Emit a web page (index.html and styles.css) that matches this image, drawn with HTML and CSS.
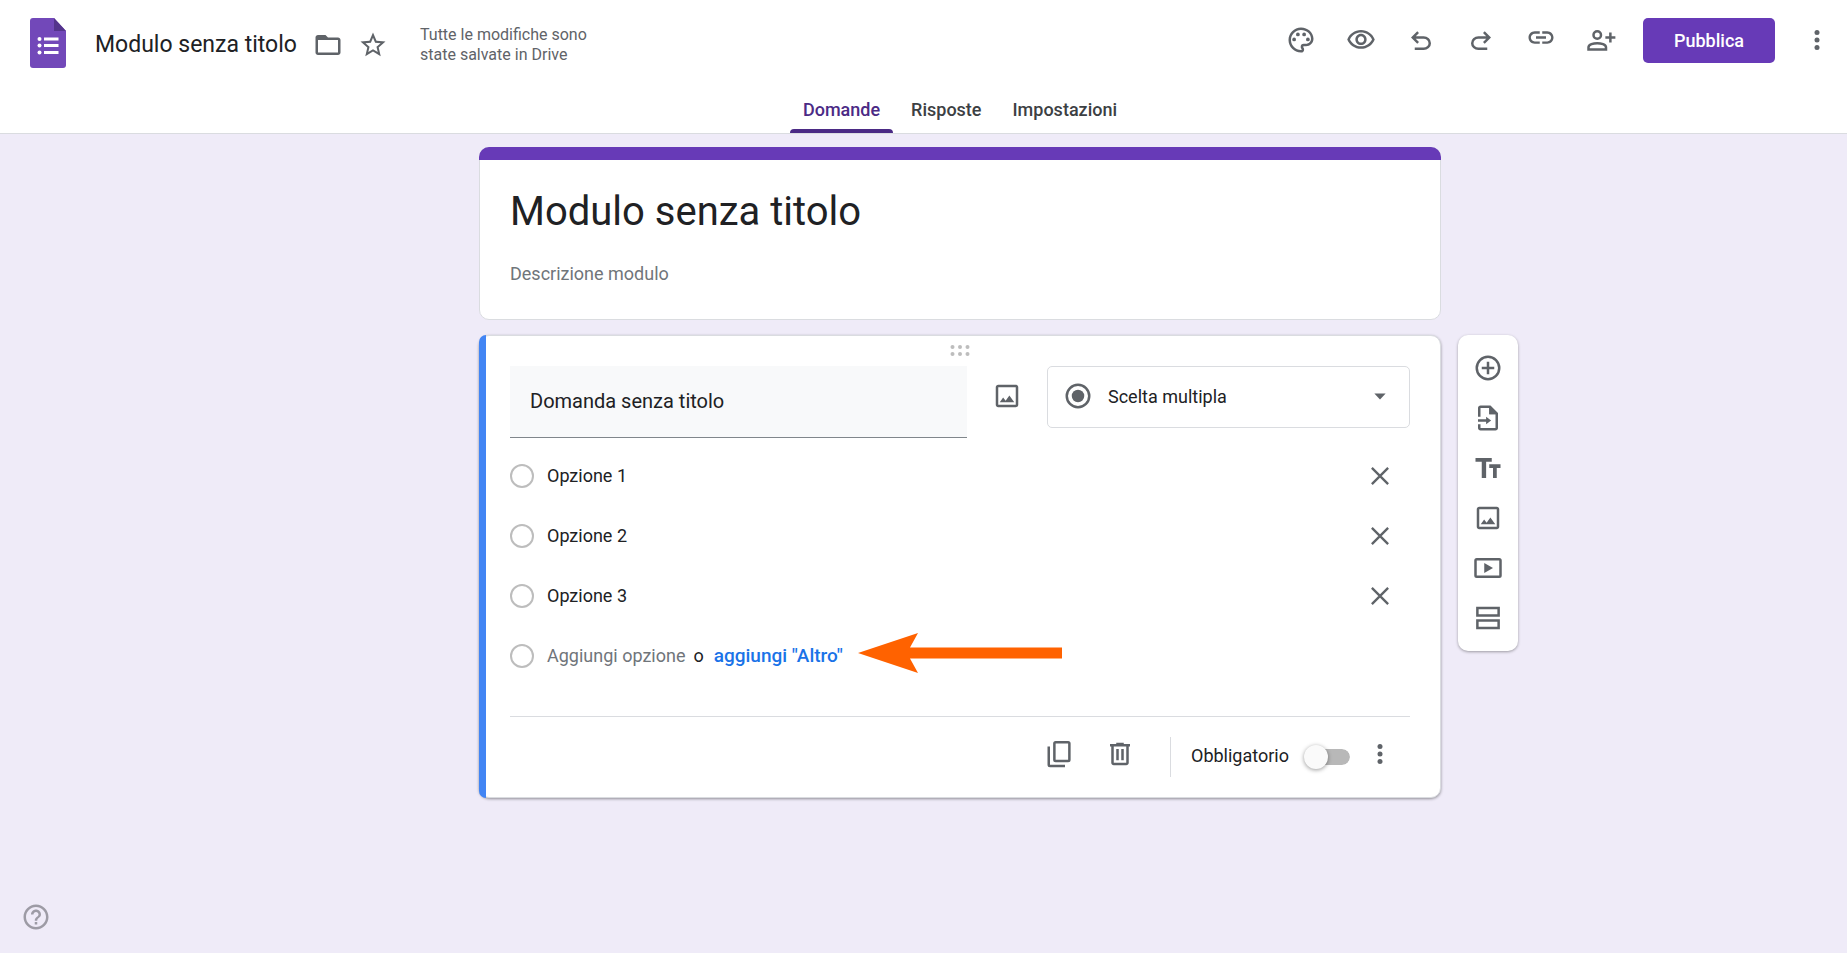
FILE: index.html
```html
<!DOCTYPE html>
<html lang="it">
<head>
<meta charset="utf-8">
<meta name="viewport" content="width=device-width, initial-scale=1">
<title>Modulo senza titolo</title>
<link rel="stylesheet" href="styles.css">
</head>
<body>
<svg class="sprite" aria-hidden="true">
  <symbol id="i-more" viewBox="0 0 24 24"><circle cx="12" cy="6" r="2"/><circle cx="12" cy="12" r="2"/><circle cx="12" cy="18" r="2"/></symbol>
  <symbol id="i-image" viewBox="0 0 24 24"><path d="M19 5v14H5V5h14m0-2H5c-1.100 0-2 .9-2 2v14c0 1.100.9 2 2 2h14c1.100 0 2-.9 2-2V5c0-1.100-.9-2-2-2zM6.200 17l2.700-3.800 2 2.500 3-4.200L17.800 17z"/></symbol>
  <symbol id="i-close" viewBox="0 0 24 24"><path d="M5.500 5.500l13 13m0-13l-13 13" fill="none" stroke="currentColor" stroke-width="1.900"/></symbol>
</svg>

<header class="topbar">
  <div class="toolbar">
    <a class="logo" href="#" aria-label="Home di Moduli">
      <svg viewBox="0 0 36 50" width="36" height="50">
        <path d="M3 0h21l12 13v34a3 3 0 0 1-3 3H3a3 3 0 0 1-3-3V3a3 3 0 0 1 3-3z" fill="#7248b9"/>
        <path d="M24 0l12 13H24z" fill="#54348c"/>
        <g fill="#fff"><circle cx="9.500" cy="21" r="2"/><circle cx="9.500" cy="27.500" r="2"/><circle cx="9.500" cy="34.500" r="2"/><path d="M14 19.500h14.500v3H14zM14 26h14.500v3H14zM14 33h14.500v3H14z"/></g>
      </svg>
    </a>
    <input class="doc-name" type="text" value="Modulo senza titolo" aria-label="Nome del modulo">
    <button class="icon-btn small" aria-label="Sposta nella cartella"><svg class="icon" viewBox="0 0 24 24"><path d="M20 6h-8l-2-2H4c-1.100 0-1.990.9-1.990 2L2 18c0 1.100.9 2 2 2h16c1.100 0 2-.9 2-2V8c0-1.100-.9-2-2-2zm0 12H4V8h16v10z"/></svg></button>
    <button class="icon-btn small" aria-label="Speciali"><svg class="icon" viewBox="0 0 24 24"><path d="M22 9.240l-7.190-.62L12 2 9.190 8.630 2 9.240l5.460 4.730L5.820 21 12 17.270 18.180 21l-1.630-7.030L22 9.240zM12 15.400l-3.760 2.270 1-4.280-3.320-2.880 4.380-.38L12 6.100l1.710 4.040 4.380.38-3.320 2.880 1 4.280L12 15.400z"/></svg></button>
    <p class="save-state">Tutte le modifiche sono state salvate in Drive</p>
    <div class="actions">
      <button class="icon-btn" aria-label="Personalizza tema"><svg class="icon" viewBox="0 0 24 24"><path d="M12 22C6.490 22 2 17.510 2 12S6.490 2 12 2s10 4.040 10 9c0 3.310-2.690 6-6 6h-1.770c-.28 0-.5.22-.5.5 0 .12.05.23.13.33.41.47.64 1.060.64 1.670A2.500 2.500 0 0 1 12 22zm0-18c-4.410 0-8 3.590-8 8s3.590 8 8 8c.28 0 .5-.22.5-.5a.54.54 0 0 0-.14-.35c-.41-.46-.63-1.050-.63-1.650a2.500 2.500 0 0 1 2.500-2.500H16c2.210 0 4-1.790 4-4 0-3.860-3.590-7-8-7z"/><circle cx="6.500" cy="11.500" r="1.500"/><circle cx="9.500" cy="7.500" r="1.500"/><circle cx="14.500" cy="7.500" r="1.500"/><circle cx="17.500" cy="11.500" r="1.500"/></svg></button>
      <button class="icon-btn" aria-label="Anteprima"><svg class="icon" viewBox="0 0 24 24"><path d="M12 6c3.790 0 7.170 2.130 8.820 5.500C19.170 14.870 15.790 17 12 17s-7.170-2.130-8.820-5.500C4.830 8.130 8.210 6 12 6m0-2C7 4 2.730 7.110 1 11.500 2.730 15.890 7 19 12 19s9.270-3.110 11-7.500C21.270 7.110 17 4 12 4zm0 5c1.380 0 2.500 1.120 2.500 2.500S13.380 14 12 14s-2.500-1.120-2.500-2.500S10.620 9 12 9m0-2c-2.480 0-4.500 2.020-4.500 4.500S9.520 16 12 16s4.500-2.020 4.500-4.500S14.480 7 12 7z"/></svg></button>
      <button class="icon-btn" aria-label="Annulla"><svg class="icon" viewBox="0 0 24 24"><path d="M7 20v-2h7.100q1.575 0 2.738-1T18 14.500t-1.162-2.500T14.100 11H7.800l2.600 2.600L9 15l-5-5 5-5 1.400 1.400L7.800 9h6.300q2.425 0 4.163 1.575T20 14.500t-1.738 3.925T14.100 20z"/></svg></button>
      <button class="icon-btn" aria-label="Ripeti"><svg class="icon flip" viewBox="0 0 24 24"><path d="M7 20v-2h7.100q1.575 0 2.738-1T18 14.500t-1.162-2.500T14.100 11H7.800l2.600 2.600L9 15l-5-5 5-5 1.400 1.400L7.800 9h6.300q2.425 0 4.163 1.575T20 14.500t-1.738 3.925T14.100 20z"/></svg></button>
      <button class="icon-btn" aria-label="Copia link"><svg class="icon" viewBox="0 0 24 24"><path d="M3.900 10c0-1.710 1.390-3.100 3.100-3.100h4V5H7c-2.760 0-5 2.240-5 5s2.240 5 5 5h4v-1.900H7c-1.710 0-3.100-1.390-3.100-3.100zM8 11h8V9H8v2zm9-6h-4v1.900h4c1.710 0 3.100 1.390 3.100 3.100s-1.390 3.100-3.100 3.100h-4V15h4c2.760 0 5-2.240 5-5s-2.240-5-5-5z"/></svg></button>
      <button class="icon-btn" aria-label="Condividi"><svg class="icon" viewBox="0 0 24 24"><g fill="none" stroke="currentColor" stroke-width="2"><circle cx="9" cy="8" r="3"/><path d="M2 19.500v-1.700C2 15.500 6 14.500 9 14.500s7 1 7 3.300v1.700zM19.500 6v8M15.500 10h8"/></g></svg></button>
      <button class="publish">Pubblica</button>
      <button class="icon-btn more" aria-label="Altro"><svg class="icon"><use href="#i-more"/></svg></button>
    </div>
  </div>
  <nav class="tabs" aria-label="Sezioni">
    <a class="tab active" href="#domande" aria-current="page">Domande</a>
    <a class="tab" href="#risposte">Risposte</a>
    <a class="tab" href="#impostazioni">Impostazioni</a>
  </nav>
</header>

<main class="editor">
  <section class="card title-card">
    <input class="form-title" type="text" value="Modulo senza titolo" aria-label="Titolo del modulo">
    <input class="form-desc" type="text" placeholder="Descrizione modulo" aria-label="Descrizione modulo">
  </section>

  <section class="card question">
    <div class="drag"><svg viewBox="0 0 20 11" width="20" height="11"><circle cx="2.500" cy="2" r="2"/><circle cx="10" cy="2" r="2"/><circle cx="17.500" cy="2" r="2"/><circle cx="2.500" cy="9" r="2"/><circle cx="10" cy="9" r="2"/><circle cx="17.500" cy="9" r="2"/></svg></div>
    <div class="question-head">
      <input class="question-title" type="text" value="Domanda senza titolo" aria-label="Domanda">
      <button class="icon-btn image-btn" aria-label="Aggiungi immagine"><svg class="icon"><use href="#i-image"/></svg></button>
      <div class="type-picker">
        <svg class="icon" viewBox="0 0 24 24"><circle cx="12" cy="12" r="9" fill="none" stroke="currentColor" stroke-width="2"/><circle cx="12" cy="12" r="5"/></svg>
        <select class="type-select" aria-label="Tipo di domanda"><option>Scelta multipla</option></select>
        <svg class="icon caret" viewBox="0 0 24 24"><path d="M7.500 10h9L12 14.700z"/></svg>
      </div>
    </div>

    <div class="options">
      <div class="option"><input class="radio" type="radio" name="o" id="o1" disabled><label for="o1">Opzione 1</label><button class="icon-btn remove" aria-label="Rimuovi opzione 1"><svg class="icon"><use href="#i-close"/></svg></button></div>
      <div class="option"><input class="radio" type="radio" name="o" id="o2" disabled><label for="o2">Opzione 2</label><button class="icon-btn remove" aria-label="Rimuovi opzione 2"><svg class="icon"><use href="#i-close"/></svg></button></div>
      <div class="option"><input class="radio" type="radio" name="o" id="o3" disabled><label for="o3">Opzione 3</label><button class="icon-btn remove" aria-label="Rimuovi opzione 3"><svg class="icon"><use href="#i-close"/></svg></button></div>
      <div class="option"><input class="radio" type="radio" name="o" id="o4" disabled><label for="o4" class="muted">Aggiungi opzione</label><span class="or">o</span><button class="add-other">aggiungi "Altro"</button>
        <svg class="pointer" viewBox="0 0 206 44" width="206" height="44"><path d="M1 21L61 1l-8 14.500h152v11H53L61 41z" fill="#ff6200"/></svg>
      </div>
    </div>

    <footer class="question-foot">
      <button class="icon-btn" aria-label="Duplica"><svg class="icon" viewBox="0 0 24 24"><g fill="none" stroke="currentColor" stroke-width="2"><rect x="7.500" y="2.500" width="12" height="15" rx="1"/><path d="M3 6v14.500a1 1 0 0 0 1 1h12"/></g></svg></button>
      <button class="icon-btn" aria-label="Elimina"><svg class="icon" viewBox="0 0 24 24"><path d="M15 4V3H9v1H4v2h1v13c0 1.100.9 2 2 2h10c1.100 0 2-.9 2-2V6h1V4h-5zm2 15H7V6h10v13zM9 8h2v9H9zM13 8h2v9h-2z"/></svg></button>
      <div class="required"><label for="req">Obbligatorio</label><input class="switch" type="checkbox" role="switch" id="req"></div>
      <button class="icon-btn" aria-label="Altre opzioni"><svg class="icon"><use href="#i-more"/></svg></button>
    </footer>
  </section>

  <aside class="side" aria-label="Aggiungi elementi">
    <button class="icon-btn" aria-label="Aggiungi domanda"><svg class="icon" viewBox="0 0 24 24"><g fill="none" stroke="currentColor" stroke-width="2"><circle cx="12" cy="12" r="9"/><path d="M12 7v10M7 12h10"/></g></svg></button>
    <button class="icon-btn" aria-label="Importa domande"><svg class="icon" viewBox="0 0 24 24"><path d="M14 2H6c-1.100 0-2 .9-2 2v7h2V4h7v5h5v11H6v-3H4v3c0 1.100.9 2 2 2h12c1.100 0 2-.9 2-2V8z"/><path d="M13 3l6 6h-6z"/><path d="M4 13h6.500v-2L14.500 14l-4 3v-2H4z"/></svg></button>
    <button class="icon-btn" aria-label="Aggiungi titolo e descrizione"><svg class="icon" viewBox="0 0 24 24"><path d="M2 4v3h5v13h3.500V7H15V4zM22 9h-9v3h3v8h3v-8h3z"/></svg></button>
    <button class="icon-btn" aria-label="Aggiungi immagine"><svg class="icon"><use href="#i-image"/></svg></button>
    <button class="icon-btn" aria-label="Aggiungi video"><svg class="icon" viewBox="0 0 24 24"><rect x="2" y="5" width="20" height="14" rx="1" fill="none" stroke="currentColor" stroke-width="2"/><path d="M9 8v8l7-4z"/></svg></button>
    <button class="icon-btn" aria-label="Aggiungi sezione"><svg class="icon" viewBox="0 0 24 24"><path d="M3.500 4h17v6h-17zM3.500 14h17v6h-17z" fill="none" stroke="currentColor" stroke-width="2"/></svg></button>
  </aside>
</main>

<button class="help" aria-label="Guida"><svg class="icon" viewBox="0 0 24 24"><path d="M11 18h2v-2h-2v2zm1-16C6.480 2 2 6.480 2 12s4.480 10 10 10 10-4.480 10-10S17.520 2 12 2zm0 18c-4.410 0-8-3.590-8-8s3.590-8 8-8 8 3.590 8 8-3.590 8-8 8zm0-14c-2.210 0-4 1.790-4 4h2c0-1.100.9-2 2-2s2 .9 2 2c0 2-3 1.750-3 5h2c0-2.250 3-2.500 3-5 0-2.210-1.790-4-4-4z"/></svg></button>
</body>
</html>
```

FILE: styles.css
```css
*, *::before { box-sizing: border-box; }

body {
  margin: 0;
  min-height: 100vh;
  background: #efebf8;
  color: #202124;
  font-family: Roboto, "Noto Sans", sans-serif;
  font-size: 18px;
}

button, input, select {
  margin: 0;
  padding: 0;
  border: 0;
  background: none;
  color: inherit;
  font: inherit;
}

button { cursor: pointer; }
svg { display: block; }
.sprite { position: absolute; width: 0; height: 0; }
.icon { width: 30px; height: 30px; fill: currentColor; flex: none; }
.flip { transform: scaleX(-1); }

.icon-btn {
  display: flex;
  align-items: center;
  justify-content: center;
  width: 60px;
  height: 50px;
  color: #5f6368;
}

/* Header */
.topbar {
  background: #fff;
  border-bottom: 1px solid #dadce0;
}

.toolbar {
  display: flex;
  align-items: flex-start;
  height: 86px;
  padding: 18px 0 0 30px;
}

.logo { margin-right: 29px; }
.doc-name { width: 210px; height: 52px; font-size: 23px; }
.icon-btn.small { width: 45px; height: 54px; }
.save-state {
  width: 180px;
  margin: 7px 0 0 25px;
  color: #5f6368;
  font-size: 16px;
  line-height: 20px;
}

.actions { display: flex; margin-left: auto; }
.actions .icon-btn { height: 43px; }
.publish {
  width: 132px;
  height: 45px;
  margin-left: 12px;
  border-radius: 5px;
  background: #673ab7;
  color: #fff;
  font-size: 18px;
  font-weight: 500;
}
.actions .more { margin-left: 12px; }

.tabs {
  display: flex;
  justify-content: center;
  gap: 5px;
  height: 47px;
  padding-left: 73px;
}
.tab {
  padding: 12px 13px 0;
  color: #3c4043;
  font-weight: 500;
  line-height: 24px;
  text-decoration: none;
}
.tab.active {
  position: relative;
  color: #4b2a85;
}
.tab.active::after {
  content: "";
  position: absolute;
  inset: auto 0 0;
  height: 4px;
  border-radius: 4px 4px 0 0;
  background: #4b2a85;
}

/* Editor */
.editor {
  display: grid;
  grid-template-columns: 1fr minmax(0, 962px) 1fr;
  gap: 15px 17px;
  align-items: start;
  padding: 13px 0 40px 73px;
}
.card {
  position: relative;
  grid-column: 2;
  border: 1px solid #dadce0;
  border-radius: 10px;
  background: #fff;
}

.title-card { padding: 12px 30px 31px; }
.title-card::before {
  content: "";
  position: absolute;
  inset: -1px -1px auto;
  height: 13px;
  border-radius: 10px 10px 0 0;
  background: #673ab7;
}
.title-card input { display: block; width: 100%; }
.form-title { height: 54px; margin-top: 24px; font-size: 40px; }
.form-desc { height: 30px; margin-top: 20px; font-size: 18px; }
.form-desc::placeholder { color: #70757a; opacity: 1; }

.question {
  padding: 0 30px;
  box-shadow: 0 1px 3px rgba(0, 0, 0, .4);
}
.question::before {
  content: "";
  position: absolute;
  inset: -1px auto -1px -1px;
  width: 7px;
  border-radius: 10px 0 0 10px;
  background: #4285f4;
}
.drag {
  display: flex;
  justify-content: center;
  height: 30px;
  padding-top: 9px;
  fill: #bdbdbd;
}

.question-head { display: flex; align-items: flex-start; }
.question-title {
  flex: 1;
  min-width: 0;
  height: 72px;
  padding: 0 20px 2px;
  border-bottom: 1px solid #80868b;
  background: #f8f9fa;
  font-size: 20px;
}
.image-btn { width: 80px; height: 60px; }
.type-picker {
  display: grid;
  grid-template-columns: 61px 1fr 44px;
  width: 363px;
  height: 62px;
  border: 1px solid #dadce0;
  border-radius: 5px;
  color: #5f6368;
}
.type-picker > * { grid-row: 1; }
.type-picker .icon { grid-column: 1; margin: 14px 0 0 15px; }
.type-picker .caret { grid-column: 3; margin-left: 0; pointer-events: none; }
.type-select {
  grid-column: 1 / -1;
  width: 100%;
  height: 58px;
  padding-left: 60px;
  appearance: none;
  color: #202124;
}

.options { padding: 8px 0 30px; }
.option {
  position: relative;
  display: flex;
  align-items: center;
  height: 60px;
}
.option label, .or, .add-other { padding-bottom: 2px; }
.radio {
  width: 24px;
  height: 24px;
  margin-right: 13px;
  appearance: none;
  border: 2px solid #bdbdbd;
  border-radius: 50%;
}
.remove { margin-left: auto; }
.muted { color: #70757a; }
.or { margin: 0 10px 0 8px; }
.add-other { color: #1a73e8; font-size: 19px; font-weight: 500; }
.pointer { position: absolute; left: 347px; top: 6px; }

.question-foot {
  display: flex;
  align-items: center;
  justify-content: flex-end;
  height: 81px;
  padding-bottom: 6px;
  border-top: 1px solid #dadce0;
}
.required {
  display: flex;
  align-items: center;
  gap: 15px;
  height: 40px;
  margin: 5px 0 0 20px;
  padding-left: 20px;
  border-left: 1px solid #dadce0;
}
.required label { padding-bottom: 2px; }
.switch {
  display: flex;
  align-items: center;
  width: 46px;
  height: 16px;
  border-left: 8px solid transparent;
  border-radius: 16px;
  appearance: none;
  background: #b8b8b8;
  background-clip: padding-box;
}
.switch::before {
  content: "";
  flex: none;
  width: 24px;
  height: 24px;
  margin-left: -8px;
  border-radius: 50%;
  background: #fafafa;
  box-shadow: 0 1px 4px rgba(0, 0, 0, .4);
}

.side {
  grid-column: 3;
  grid-row: 2;
  display: flex;
  flex-direction: column;
  align-items: center;
  width: 60px;
  padding: 8px 0;
  border-radius: 10px;
  background: #fff;
  box-shadow: 0 1px 3px rgba(0, 0, 0, .35);
}

.help {
  position: fixed;
  left: 21px;
  bottom: 21px;
  color: #9d9ba5;
}
```
